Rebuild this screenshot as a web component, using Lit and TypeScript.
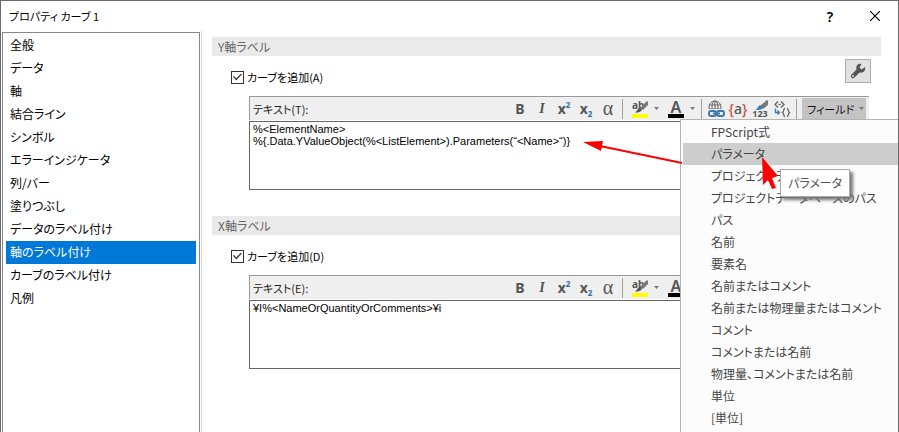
import { LitElement, html, svg, css } from "lit";
import { customElement, property } from "lit/decorators.js";

const PAGES = [
  "全般", "データ", "軸", "結合ライン", "シンボル", "エラーインジケータ", "列/バー",
  "塗りつぶし", "データのラベル付け", "軸のラベル付け", "カーブのラベル付け", "凡例",
];

const FIELDS = [
  "FPScript式", "パラメータ", "プロジェクトデータベース", "プロジェクトデータベースのパス", "パス", "名前",
  "要素名", "名前またはコメント", "名前または物理量またはコメント", "コメント",
  "コメントまたは名前", "物理量、コメントまたは名前", "単位", "[単位]",
];

const pen = svg`<path d="M15 1L16 2V5L11 10L8 8Z" fill="#777"/><path d="M8 8L10 10C8 13 5 12 3 13C5 11 5 9 8 8Z" fill="#555"/>`;

const globeIcon = html`<svg width="18" height="18" viewBox="0 0 18 18" fill="none" aria-hidden="true">
  <circle cx="8" cy="7" r="6" stroke="#666"/>
  <ellipse cx="8" cy="7" rx="3" ry="6" stroke="#666"/>
  <path d="M2 5H14M2 9H14M8 1V10" stroke="#666"/>
  <rect x="1" y="9" width="16" height="9" fill="#efefef"/>
  <rect x="2" y="11" width="7" height="5" rx="2" stroke="#3f78b0" stroke-width="2"/>
  <rect x="10" y="11" width="7" height="5" rx="2" stroke="#3f78b0" stroke-width="2"/>
  <path d="M6 13.500H13" stroke="#3f78b0" stroke-width="2"/>
</svg>`;

const codeIcon = html`<svg width="18" height="18" viewBox="0 0 18 18" fill="none" aria-hidden="true">
  <path d="M5 1.500L2 4.500L5 7.500M8 1.500L11 4.500L8 7.500" stroke="#666" stroke-width="1.300"/>
  <path d="M5.500 4.500H7.500" stroke="#666" stroke-width="1.300"/>
  <path d="M2.500 8.500V12.500H7M4.500 10.500L6.500 12.500L4.500 14.500" stroke="#3f78b0" stroke-width="1.300"/>
  <path d="M12 8.500C10 8.500 11.500 11.500 9.500 12.500C11.500 13.500 10 16.500 12 16.500M14 8.500C16 8.500 14.500 11.500 16.500 12.500C14.500 13.500 16 16.500 14 16.500" stroke="#666" stroke-width="1.300"/>
</svg>`;

const brushIcon = html`<svg width="18" height="10" viewBox="0 0 18 10" aria-hidden="true">
  <path d="M16 0L17 1V5L12 9L9 6Z" fill="#777"/>
  <path d="M9 5L12 8C10 10 7 10 4 10C7 9 7 6 9 5Z" fill="#3f78b0"/>
</svg>`;

@customElement("label-editor")
class LabelEditor extends LitElement {
  @property() heading = "";
  @property() check = "";
  @property() caption = "";
  @property() text = "";
  @property({ type: Boolean }) tools = false;

  static styles = css`
    :host { display: block; }
    .heading {
      margin: 0; padding-left: 6px; height: 19px; line-height: 19px;
      font-size: 12px; font-weight: 400; background: #eaeaea; color: #666;
    }
    .row { display: flex; align-items: flex-start; height: 40px; padding: 0 10px 0 19px; }
    .check { display: flex; align-items: center; gap: 3px; margin-top: 11px; line-height: 20px; flex: 1; font-size: 11px; }
    .box {
      appearance: none; width: 13px; height: 13px; margin: 0; flex: none;
      border: 1px solid #333; background: #fff; display: grid; place-items: center;
    }
    .box:checked::before {
      content: ""; width: 9px; height: 7px; background: #333;
      clip-path: polygon(0 45%, 12% 35%, 35% 72%, 90% 0, 100% 12%, 36% 100%);
    }
    button { font: inherit; color: #555; padding: 0; border: 0; background: none; }
    .wrench {
      width: 26px; height: 24px; margin-top: 3px; background: #e1e1e1;
      border: 1px solid #adadad; display: grid; place-items: center;
    }
    .editor { margin: 0 12px 0 37px; }
    .bar {
      display: flex; align-items: center; height: 23px; padding: 0 3px 0 3px;
      background: #efefef; border-top: 1px solid #999; border-left: 1px solid #999;
      font-size: 11px;
    }
    .caption { flex: 1; white-space: nowrap; color: #222; font-size: 11px; }
    .tool {
      width: 22px; height: 22px; flex: none; display: flex; align-items: center;
      justify-content: center; line-height: 18px;
    }
    .bold { font: 700 14px "Noto Sans", sans-serif; }
    .italic { font: italic 700 14px "Liberation Serif", serif; }
    .script { font: 700 14px "Noto Sans", sans-serif; }
    .small { font-size: 8px; line-height: 8px; color: #2d6fad; align-self: flex-start; margin-top: 3px; }
    .low { align-self: flex-end; margin: 0 0 2px; }
    .alpha { font: 20px "Liberation Serif", serif; }
    .sep { width: 1px; height: 20px; flex: none; margin: 0 3px; background: #a0a0a0; }
    .split { width: 36px; height: 22px; flex: none; display: flex; align-items: center; gap: 6px; padding-left: 6px; }
    .marker { overflow: visible; }
    .ink { width: 16px; height: 18px; border-bottom: 4px solid #000; box-sizing: border-box; font: 600 16px/14px "Noto Sans", sans-serif; }
    .caret { width: 5px; height: 3px; flex: none; background: #777; clip-path: polygon(0 0, 100% 0, 50% 100%); }
    .brace { font: 500 14px "Noto Sans", sans-serif; }
    .red { color: #d8492c; }
    .number { flex-direction: column; font: 700 9px/8px "Noto Sans", sans-serif; }
    .field {
      width: 64px; height: 21px; display: flex; align-items: center; justify-content: space-between;
      padding: 0 2px 0 5px; background: #c3c3c3; color: #111; white-space: nowrap;
    }
    .text {
      display: block; box-sizing: border-box; width: 100%; height: 69px; margin: 1px 0 0;
      padding: 1px 3px; border: 1px solid #666; border-radius: 0; resize: none; overflow: hidden;
      background: #fff; color: #000; font: 11px/12px "Liberation Sans", sans-serif; outline: 0;
    }
    .anchor { position: relative; flex: none; margin-left: 2px; }
  `;

  render() {
    return html`
      <h2 class="heading">${this.heading}</h2>
      <div class="row">
        <label class="check"><input class="box" type="checkbox" checked />${this.check}</label>
        ${this.tools ? html`<button class="wrench" aria-label="設定">
          <svg width="18" height="18" viewBox="0 0 18 18" aria-hidden="true">
            <path d="M16 5L12.500 7.500L10.500 5.500L12.500 2C9 1 6.500 4 7.500 7.500L2 13C1 15 3 17 5 16L10.500 10.500C14 11.500 17 8.500 16 5Z" fill="#555"/>
            <circle cx="4" cy="14" r="1" fill="#e1e1e1"/>
          </svg></button>` : null}
      </div>
      <div class="editor">
        <div class="bar">
          <label class="caption" for="text">${this.caption}</label>
          <button class="tool bold">B</button>
          <button class="tool italic">I</button>
          <button class="tool script">x<span class="small">2</span></button>
          <button class="tool script">x<span class="small low">2</span></button>
          <button class="tool alpha">α</button>
          <span class="sep"></span>
          <button class="split" aria-label="強調表示">
            <svg class="marker" width="16" height="18" viewBox="0 0 16 18" aria-hidden="true">
              <text x="0" y="9" font-family="Noto Sans" font-size="10" font-weight="700" fill="#555">ab</text>
              ${pen}<rect y="14" width="16" height="4" fill="#ff0"/>
            </svg><span class="caret"></span>
          </button>
          <button class="split"><span class="ink">A</span><span class="caret"></span></button>
          <span class="sep"></span>
          <button class="tool" aria-label="リンク">${globeIcon}</button>
          <button class="tool brace"><span class="red">{</span>a<span class="red">}</span></button>
          <button class="tool number">${brushIcon}123</button>
          <button class="tool" aria-label="コード">${codeIcon}</button>
          <span class="sep"></span>
          <div class="anchor">
            <button class="field">フィールド<span class="caret"></span></button>
            <slot name="menu"></slot>
          </div>
        </div>
        <textarea class="text" id="text" spellcheck="false" .value=${this.text}></textarea>
      </div>
    `;
  }
}

@customElement("field-menu")
class FieldMenu extends LitElement {
  static styles = css`
    :host { position: absolute; top: 21px; right: -35px; width: 221px; z-index: 1; font-size: 12px; }
    .menu {
      margin: 0; padding: 1px 2px 24px; list-style: none;
      background: #fcfcfc; border: 1px solid #b4b4b4;
    }
    .item {
      display: block; width: 100%; height: 22px; padding: 0 0 0 28px; border: 0; text-align: left;
      font: inherit; line-height: 20px; color: #444; background: none; white-space: nowrap;
      font-feature-settings: inherit;
    }
    .active { background: #cdcdcd; }
    .tip {
      position: absolute; left: 100px; top: 50px; padding: 0 7px; height: 26px; line-height: 26px;
      border: 1px solid #a8a8a8; background: #fff; color: #555; white-space: nowrap;
      box-shadow: 3px 3px 3px #777;
    }
    .marks { position: absolute; left: -100px; top: 20px; pointer-events: none; }
  `;

  render() {
    return html`
      <ul class="menu">
        ${FIELDS.map((name, i) => html`<li><button class="item ${i === 1 ? "active" : ""}">${name}</button></li>`)}
      </ul>
      <div class="tip" role="tooltip">パラメータ</div>
      <svg class="marks" width="202" height="60" viewBox="0 0 202 60" aria-hidden="true">
        <path d="M20 7L102 24" stroke="#f00" stroke-width="2"/>
        <path d="M3 3L23 2L21 12Z" fill="#f00"/>
        <path d="M182 18L198 37L192 39L196 49L192 50L188 41L183 46Z" fill="#f00"/>
      </svg>
    `;
  }
}

@customElement("app-root")
class AppRoot extends LitElement {
  static styles = css`
    :host {
      display: block; color: #000; font: 12px "Noto Sans CJK JP", sans-serif;
      font-feature-settings: "palt";
    }
    .window {
      display: flex; flex-direction: column; box-sizing: border-box; min-height: 100vh;
      overflow: hidden; position: relative; background: #fff;
      border: 1px solid #6b6b6b; border-bottom: 0;
    }
    .title { display: flex; align-items: center; height: 30px; padding: 0 15px 0 8px; }
    .name { flex: 1; margin: 0; font-size: 11px; font-weight: 400; }
    .control {
      width: 16px; height: 20px; margin-left: 29px; padding: 0; border: 0; background: none;
      font: 600 14px "Noto Sans", sans-serif; display: grid; place-items: center;
    }
    .body { display: flex; flex: 1; }
    .side {
      width: 198px; flex: none; box-sizing: border-box; margin: 1px 0 0 1px; padding: 1px 3px;
      border: 1px solid #828790; border-bottom: 0;
    }
    .page {
      display: block; height: 23px; line-height: 22px; padding-left: 4px;
      color: #000; text-decoration: none; white-space: nowrap;
    }
    .current { background: #0078d7; color: #fff; }
    .main {
      flex: 1; min-width: 0; display: flex; flex-direction: column; gap: 26px;
      margin-left: 1px; padding: 6px 17px 16px 10px; border-left: 1px solid #d5d8de;
    }
  `;

  render() {
    return html`
      <div class="window">
        <header class="title">
          <h1 class="name">プロパティ カーブ 1</h1>
          <button class="control" aria-label="ヘルプ">?</button>
          <button class="control" aria-label="閉じる">
            <svg width="10" height="10" viewBox="0 0 10 10" aria-hidden="true"><path d="M0 0L10 10M10 0L0 10" stroke="#000" stroke-width="1.200"/></svg>
          </button>
        </header>
        <div class="body">
          <nav class="side">
            ${PAGES.map((name, i) => html`<a class="page ${i === 9 ? "current" : ""}" href="#">${name}</a>`)}
          </nav>
          <main class="main">
            <label-editor heading="Y軸ラベル" check="カーブを追加(A)" caption="テキスト(T):" tools
              .text=${"%<ElementName>\n%{.Data.YValueObject(%<ListElement>).Parameters(“<Name>“)}"}>
              <field-menu slot="menu"></field-menu>
            </label-editor>
            <label-editor heading="X軸ラベル" check="カーブを追加(D)" caption="テキスト(E):"
              .text=${"¥I%<NameOrQuantityOrComments>¥i"}></label-editor>
          </main>
        </div>
      </div>
    `;
  }
}
